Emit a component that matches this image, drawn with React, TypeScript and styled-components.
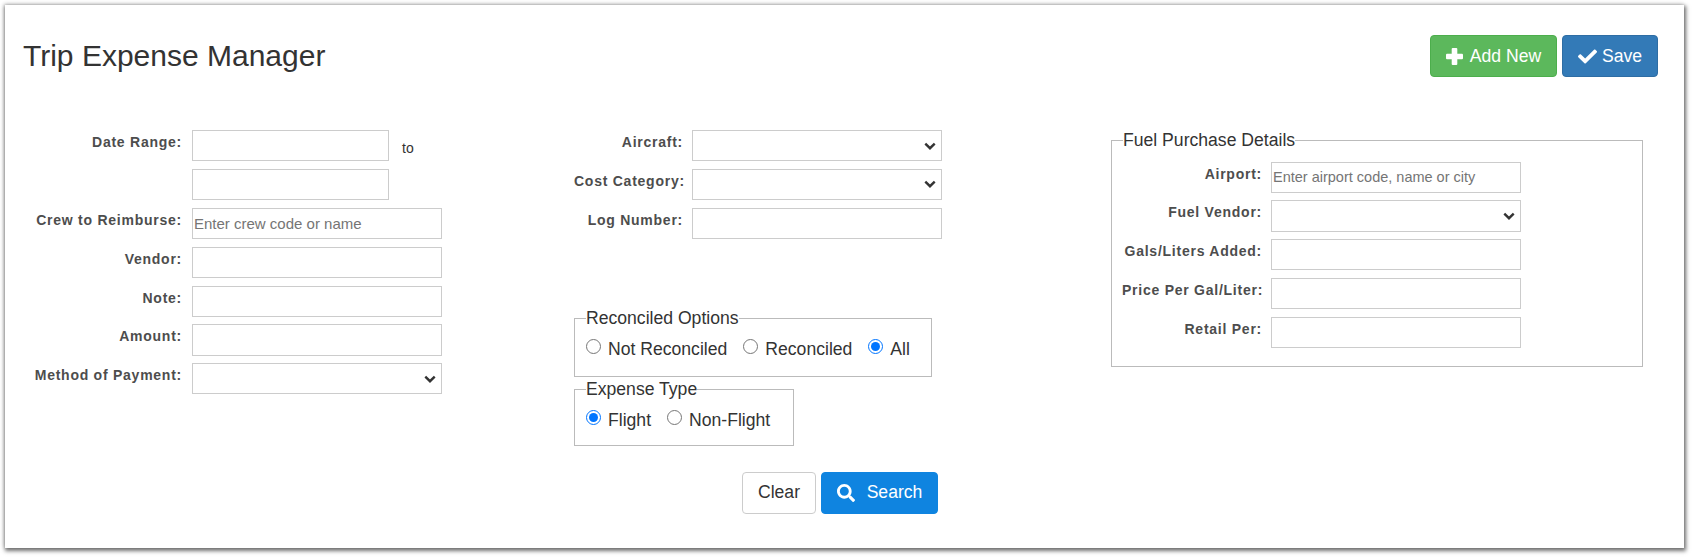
import React from "react";
import styled, { createGlobalStyle } from "styled-components";
import { FaCheck, FaSearch } from "react-icons/fa";

const Global = createGlobalStyle`
  html, body { margin: 0; padding: 0; background: #fff; }
  body { font-family: "Liberation Sans", Arial, sans-serif; color: #333; }
  * { box-sizing: border-box; }
`;

const Page = styled.div`
  padding: 5px 9px 9px 5px;
`;

const Card = styled.main`
  height: 543px;
  padding: 30px 26px 0 18px;
  background: #fff;
  box-shadow: 1px 2px 4px 1px rgba(0, 0, 0, 0.55), -1px -1px 4px rgba(0, 0, 0, 0.2);
`;

const Header = styled.header`
  display: flex;
  justify-content: space-between;
  align-items: center;
  height: 42px;
`;

const Title = styled.h1`
  margin: 0;
  font-size: 30px;
  font-weight: 400;
  line-height: 42px;
  color: #333;
`;

const Actions = styled.div`
  display: flex;
  gap: 5px;
`;

const Button = styled.button<{ $bg: string; $border: string; $fg?: string; $w: number; $gap: number }>`
  display: inline-flex;
  align-items: center;
  justify-content: center;
  gap: ${(p) => p.$gap}px;
  width: ${(p) => p.$w}px;
  height: 42px;
  padding: 0;
  font: 400 17.6px "Liberation Sans", Arial, sans-serif;
  color: ${(p) => p.$fg || "#fff"};
  background: ${(p) => p.$bg};
  border: 1px solid ${(p) => p.$border};
  border-radius: 4px;
`;

const Columns = styled.div`
  display: flex;
  margin-top: 53px;
`;

const Column = styled.section<{ $w: number }>`
  width: ${(p) => p.$w}px;
  flex: none;
`;

const Rows = styled.div`
  display: flex;
  flex-direction: column;
  gap: 7.7px;
`;

const Row = styled.div<{ $gap: number }>`
  display: flex;
  align-items: flex-start;
  gap: ${(p) => p.$gap}px;
`;

const Label = styled.label<{ $w: number }>`
  flex: none;
  width: ${(p) => p.$w}px;
  padding-top: 4px;
  font-size: 14px;
  line-height: 16px;
  font-weight: 700;
  letter-spacing: 0.75px;
  text-align: right;
  white-space: nowrap;
  color: #4d4d4d;
`;

const fieldBase = `
  height: 31.2px;
  border: 1px solid #ccc;
  border-radius: 0;
  background-color: #fff;
  font-family: "Liberation Sans", Arial, sans-serif;
  font-weight: 400;
  color: #333;
  outline: none;
`;

const Input = styled.input<{ $w?: number; $fs?: number }>`
  ${fieldBase}
  width: ${(p) => p.$w ?? 250}px;
  padding: 1px 2px 1px 1px;
  font-size: ${(p) => p.$fs ?? 15}px;
  &::placeholder { color: #757575; opacity: 1; }
`;

const chevron =
  "data:image/svg+xml;utf8," +
  encodeURIComponent(
    '<svg xmlns="http://www.w3.org/2000/svg" width="12" height="8" viewBox="0 0 12 8"><path d="M1.3 1.6 6 6.2l4.7-4.6" fill="none" stroke="#333" stroke-width="2.4"/></svg>'
  );

const Select = styled.select`
  ${fieldBase}
  width: 250px;
  padding: 0 2px;
  font-size: 15px;
  appearance: none;
  background-image: url("${chevron}");
  background-repeat: no-repeat;
  background-position: right 5px center;
`;

const To = styled.span`
  display: block;
  height: 31.2px;
  margin-left: 3px;
  font-size: 14px;
  line-height: 36px;
  color: #333;
`;

const Group = styled.fieldset<{ $w: number; $h: number }>`
  display: block;
  width: ${(p) => p.$w}px;
  height: ${(p) => p.$h}px;
  margin: 0;
  padding: 0 11px;
  border: 1px solid #bbb;
  min-width: 0;
`;

const Legend = styled.legend`
  padding: 0;
  font-size: 17.6px;
  line-height: 20px;
  color: #333;
`;

const OptionRow = styled.div`
  display: flex;
  gap: 16px;
  margin-top: 10.5px;
`;

const Option = styled.label`
  display: inline-flex;
  align-items: flex-start;
  gap: 7px;
  font-size: 17.6px;
  line-height: 20px;
  color: #333;
  white-space: nowrap;
`;

const Radio = styled.input.attrs({ type: "radio" })`
  width: 15px;
  height: 15px;
  margin: 0;
`;

const GroupStack = styled.div`
  display: flex;
  flex-direction: column;
  gap: 2.5px;
  margin-top: 69.5px;
`;

const SearchActions = styled.div`
  display: flex;
  justify-content: flex-end;
  gap: 5px;
  width: 364px;
  margin-top: 26px;
`;

const FuelRows = styled(Rows)`
  margin-top: 11.5px;
  margin-left: -1px;
`;

const LeftRow = ({ label, children }: { label: string; children: React.ReactNode }) => (
  <Row $gap={10}>
    <Label $w={159}>{label}</Label>
    {children}
  </Row>
);
const MidRow = ({ label, children }: { label: string; children: React.ReactNode }) => (
  <Row $gap={9}>
    <Label $w={109}>{label}</Label>
    {children}
  </Row>
);
const FuelRow = ({ label, children }: { label: string; children: React.ReactNode }) => (
  <Row $gap={9}>
    <Label $w={140}>{label}</Label>
    {children}
  </Row>
);

const PlusIcon = () => (
  <svg width="17" height="17" viewBox="0 0 17 17" fill="#fff" aria-hidden="true">
    <rect x="5.7" y="0" width="5.6" height="17" rx="1" />
    <rect x="0" y="5.7" width="17" height="5.6" rx="1" />
  </svg>
);

export default function App() {
  return (
    <>
      <Global />
      <Page>
        <Card>
          <Header>
            <Title>Trip Expense Manager</Title>
            <Actions>
              <Button $bg="#5cb85c" $border="#4cae4c" $w={127} $gap={7}>
                <PlusIcon />
                Add New
              </Button>
              <Button $bg="#337ab7" $border="#2e6da4" $w={96} $gap={5}>
                <FaCheck size={19} />
                Save
              </Button>
            </Actions>
          </Header>
          <Columns>
            <Column $w={551}>
              <Rows>
                <LeftRow label="Date Range:">
                  <Input $w={197} />
                  <To>to</To>
                </LeftRow>
                <LeftRow label="">
                  <Input $w={197} />
                </LeftRow>
                <LeftRow label="Crew to Reimburse:">
                  <Input placeholder="Enter crew code or name" />
                </LeftRow>
                <LeftRow label="Vendor:">
                  <Input />
                </LeftRow>
                <LeftRow label="Note:">
                  <Input />
                </LeftRow>
                <LeftRow label="Amount:">
                  <Input />
                </LeftRow>
                <LeftRow label="Method of Payment:">
                  <Select />
                </LeftRow>
              </Rows>
            </Column>
            <Column $w={537}>
              <Rows>
                <MidRow label="Aircraft:">
                  <Select />
                </MidRow>
                <MidRow label="Cost Category:">
                  <Select />
                </MidRow>
                <MidRow label="Log Number:">
                  <Input />
                </MidRow>
              </Rows>
              <GroupStack>
                <Group $w={358} $h={68.5}>
                  <Legend>Reconciled Options</Legend>
                  <OptionRow>
                    <Option>
                      <Radio name="rec" />
                      Not Reconciled
                    </Option>
                    <Option>
                      <Radio name="rec" />
                      Reconciled
                    </Option>
                    <Option>
                      <Radio name="rec" defaultChecked />
                      All
                    </Option>
                  </OptionRow>
                </Group>
                <Group $w={220} $h={66.5}>
                  <Legend>Expense Type</Legend>
                  <OptionRow>
                    <Option>
                      <Radio name="exp" defaultChecked />
                      Flight
                    </Option>
                    <Option>
                      <Radio name="exp" />
                      Non-Flight
                    </Option>
                  </OptionRow>
                </Group>
              </GroupStack>
              <SearchActions>
                <Button $bg="#fff" $border="#ccc" $fg="#333" $w={74} $gap={0}>
                  Clear
                </Button>
                <Button $bg="#0f84e0" $border="#0f84e0" $w={117} $gap={12}>
                  <FaSearch size={18} />
                  Search
                </Button>
              </SearchActions>
            </Column>
            <Column $w={532}>
              <Group $w={532} $h={236.5}>
                <Legend>Fuel Purchase Details</Legend>
                <FuelRows>
                  <FuelRow label="Airport:">
                    <Input $fs={14.5} placeholder="Enter airport code, name or city" />
                  </FuelRow>
                  <FuelRow label="Fuel Vendor:">
                    <Select />
                  </FuelRow>
                  <FuelRow label="Gals/Liters Added:">
                    <Input />
                  </FuelRow>
                  <FuelRow label="Price Per Gal/Liter:">
                    <Input />
                  </FuelRow>
                  <FuelRow label="Retail Per:">
                    <Input />
                  </FuelRow>
                </FuelRows>
              </Group>
            </Column>
          </Columns>
        </Card>
      </Page>
    </>
  );
}
